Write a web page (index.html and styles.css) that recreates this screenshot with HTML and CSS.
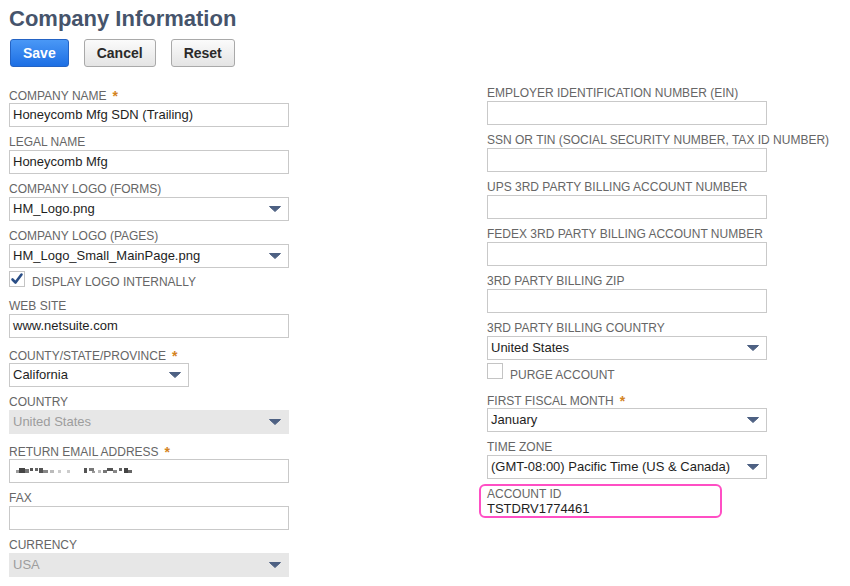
FILE: index.html
```html
<!DOCTYPE html>
<html lang="en">
<head>
<meta charset="utf-8">
<title>Company Information</title>
<link rel="stylesheet" href="styles.css">
</head>
<body>
<div class="page">
  <h1 class="title">Company Information</h1>
  <div class="actions">
    <button class="btn btn-primary">Save</button>
    <button class="btn">Cancel</button>
    <button class="btn">Reset</button>
  </div>

  <div class="form">
    <div class="col">
      <div class="field">
        <div class="label req">COMPANY NAME<span class="star">*</span></div>
        <div class="input">Honeycomb Mfg SDN (Trailing)</div>
      </div>
      <div class="field">
        <div class="label">LEGAL NAME</div>
        <div class="input">Honeycomb Mfg</div>
      </div>
      <div class="field">
        <div class="label">COMPANY LOGO (FORMS)</div>
        <div class="input select"><span>HM_Logo.png</span><svg class="arrow" width="12" height="6" viewBox="0 0 12 6"><path d="M0.5 0.5 H11.5 L6 5.5 Z" fill="#4e6183" stroke="#4e6183" stroke-linejoin="round"/></svg></div>
      </div>
      <div class="field">
        <div class="label">COMPANY LOGO (PAGES)</div>
        <div class="input select"><span>HM_Logo_Small_MainPage.png</span><svg class="arrow" width="12" height="6" viewBox="0 0 12 6"><path d="M0.5 0.5 H11.5 L6 5.5 Z" fill="#4e6183" stroke="#4e6183" stroke-linejoin="round"/></svg></div>
      </div>
      <div class="check-row">
        <span class="box"><svg width="14" height="14" viewBox="0 0 14 14"><path d="M2.5 7.5 L5.5 10.5 L11.5 2.5" fill="none" stroke="#2a4e86" stroke-width="2.6" stroke-linecap="round" stroke-linejoin="round"/></svg></span>
        <span class="check-label">DISPLAY LOGO INTERNALLY</span>
      </div>
      <div class="field">
        <div class="label">WEB SITE</div>
        <div class="input">www.netsuite.com</div>
      </div>
      <div class="field">
        <div class="label req">COUNTY/STATE/PROVINCE<span class="star">*</span></div>
        <div class="input select short"><span>California</span><svg class="arrow" width="12" height="6" viewBox="0 0 12 6"><path d="M0.5 0.5 H11.5 L6 5.5 Z" fill="#4e6183" stroke="#4e6183" stroke-linejoin="round"/></svg></div>
      </div>
      <div class="field">
        <div class="label">COUNTRY</div>
        <div class="input select disabled"><span>United States</span><svg class="arrow" width="12" height="6" viewBox="0 0 12 6"><path d="M0.5 0.5 H11.5 L6 5.5 Z" fill="#4e6183" stroke="#4e6183" stroke-linejoin="round"/></svg></div>
      </div>
      <div class="field">
        <div class="label req">RETURN EMAIL ADDRESS<span class="star">*</span></div>
        <div class="input">
          <svg class="blurred" width="134" height="8" viewBox="0 0 134 8">
            <rect x="2" y="3" width="3" height="3" fill="#9a9a9a"/>
            <rect x="5" y="1" width="6" height="5" fill="#444"/>
            <rect x="11" y="2" width="4" height="4" fill="#777"/>
            <rect x="16" y="1" width="3" height="3" fill="#555"/>
            <rect x="21" y="1" width="3" height="3" fill="#666"/>
            <rect x="25" y="1" width="4" height="5" fill="#555"/>
            <rect x="29" y="3" width="5" height="3" fill="#888"/>
            <rect x="36" y="3" width="4" height="3" fill="#bbb"/>
            <rect x="44" y="3" width="3" height="3" fill="#ccc"/>
            <rect x="53" y="3" width="3" height="3" fill="#ccc"/>
            <rect x="70" y="1" width="3" height="5" fill="#555"/>
            <rect x="75" y="1" width="5" height="3" fill="#777"/>
            <rect x="78" y="4" width="3" height="2" fill="#999"/>
            <rect x="84" y="3" width="3" height="3" fill="#bbb"/>
            <rect x="89" y="3" width="4" height="3" fill="#777"/>
            <rect x="93" y="1" width="6" height="3" fill="#555"/>
            <rect x="99" y="3" width="4" height="3" fill="#888"/>
            <rect x="105" y="1" width="3" height="3" fill="#666"/>
            <rect x="110" y="1" width="4" height="5" fill="#444"/>
            <rect x="114" y="3" width="4" height="3" fill="#666"/>
          </svg>
        </div>
      </div>
      <div class="field">
        <div class="label">FAX</div>
        <div class="input"></div>
      </div>
      <div class="field">
        <div class="label">CURRENCY</div>
        <div class="input select disabled"><span>USA</span><svg class="arrow" width="12" height="6" viewBox="0 0 12 6"><path d="M0.5 0.5 H11.5 L6 5.5 Z" fill="#4e6183" stroke="#4e6183" stroke-linejoin="round"/></svg></div>
      </div>
    </div>

    <div class="col">
      <div class="field">
        <div class="label">EMPLOYER IDENTIFICATION NUMBER (EIN)</div>
        <div class="input"></div>
      </div>
      <div class="field">
        <div class="label">SSN OR TIN (SOCIAL SECURITY NUMBER, TAX ID NUMBER)</div>
        <div class="input"></div>
      </div>
      <div class="field">
        <div class="label">UPS 3RD PARTY BILLING ACCOUNT NUMBER</div>
        <div class="input"></div>
      </div>
      <div class="field">
        <div class="label">FEDEX 3RD PARTY BILLING ACCOUNT NUMBER</div>
        <div class="input"></div>
      </div>
      <div class="field">
        <div class="label">3RD PARTY BILLING ZIP</div>
        <div class="input"></div>
      </div>
      <div class="field">
        <div class="label">3RD PARTY BILLING COUNTRY</div>
        <div class="input select"><span>United States</span><svg class="arrow" width="12" height="6" viewBox="0 0 12 6"><path d="M0.5 0.5 H11.5 L6 5.5 Z" fill="#4e6183" stroke="#4e6183" stroke-linejoin="round"/></svg></div>
      </div>
      <div class="check-row">
        <span class="box"></span>
        <span class="check-label">PURGE ACCOUNT</span>
      </div>
      <div class="field">
        <div class="label req">FIRST FISCAL MONTH<span class="star">*</span></div>
        <div class="input select"><span>January</span><svg class="arrow" width="12" height="6" viewBox="0 0 12 6"><path d="M0.5 0.5 H11.5 L6 5.5 Z" fill="#4e6183" stroke="#4e6183" stroke-linejoin="round"/></svg></div>
      </div>
      <div class="field">
        <div class="label">TIME ZONE</div>
        <div class="input select"><span>(GMT-08:00) Pacific Time (US &amp; Canada)</span><svg class="arrow" width="12" height="6" viewBox="0 0 12 6"><path d="M0.5 0.5 H11.5 L6 5.5 Z" fill="#4e6183" stroke="#4e6183" stroke-linejoin="round"/></svg></div>
      </div>
      <div class="account">
        <div class="account-label">ACCOUNT ID</div>
        <div class="account-value">TSTDRV1774461</div>
      </div>
    </div>
  </div>
</div>
</body>
</html>
```

FILE: styles.css
```css
* {
  box-sizing: border-box;
}

html, body {
  margin: 0;
  padding: 0;
  background: #ffffff;
}

body {
  font-family: "Liberation Sans", Arial, Helvetica, sans-serif;
  color: #222;
}

.page {
  padding: 6px 0 0 9px;
}

.title {
  margin: 0;
  font-size: 22px;
  line-height: 26px;
  font-weight: bold;
  color: #46546b;
}

.actions {
  display: flex;
  gap: 15px;
  margin: 7px 0 0 1px;
}

.btn {
  height: 28px;
  padding: 0 12px;
  font-family: "Liberation Sans", Arial, Helvetica, sans-serif;
  font-size: 14px;
  font-weight: bold;
  color: #2a2a2a;
  border: 1px solid #a9a9a9;
  border-radius: 3px;
  background: linear-gradient(#fbfbfb, #e4e4e4);
}

.btn-primary {
  color: #ffffff;
  border-color: #2463c4;
  background: linear-gradient(#4a98f6, #1d6fe4);
}

.form {
  display: grid;
  grid-template-columns: 478px 1fr;
  margin-top: 11px;
}

.col {
  display: flex;
  flex-direction: column;
}

.field {
  display: flex;
  flex-direction: column;
}

.label {
  height: 23px;
  display: flex;
  align-items: flex-end;
  padding-bottom: 1px;
  font-size: 12px;
  line-height: 14px;
  color: #666;
  white-space: nowrap;
}

.label.req {
  height: 25px;
  padding-bottom: 0;
}

.star {
  margin-left: 6px;
  color: #d4841f;
  font-weight: bold;
  font-size: 14px;
  line-height: 14px;
}

.input {
  width: 280px;
  height: 24px;
  border: 1px solid #c9c9c9;
  background: #fff;
  padding: 0 3px;
  font-size: 13px;
  line-height: 22px;
  color: #1e1e1e;
  display: flex;
  align-items: center;
  white-space: nowrap;
}

.select {
  justify-content: space-between;
  padding-right: 7px;
}

.select.short {
  width: 180px;
}

.select.disabled {
  background: #e7e7e7;
  border-color: #e7e7e7;
  color: #9d9d9d;
}

.arrow {
  flex: none;
  display: block;
}

.blurred {
  display: block;
  margin-left: 1px;
  filter: blur(0.5px);
}

.check-row {
  height: 23px;
  display: flex;
  align-items: baseline;
  padding-top: 3px;
}

.box {
  width: 16px;
  height: 16px;
  border: 1px solid #c4c4c4;
  background: #fff;
  display: flex;
  align-items: center;
  justify-content: center;
}

.check-label {
  margin-left: 7px;
  font-size: 12px;
  line-height: 14px;
  color: #666;
}

.account {
  width: 243px;
  margin: 5px 0 0 -8px;
  border: 2px solid #ff4fc4;
  border-radius: 6px;
  padding: 1px 6px 0;
}

.account-label {
  font-size: 12px;
  line-height: 14px;
  color: #666;
}

.account-value {
  font-size: 13px;
  line-height: 15px;
  color: #1e1e1e;
}
```
